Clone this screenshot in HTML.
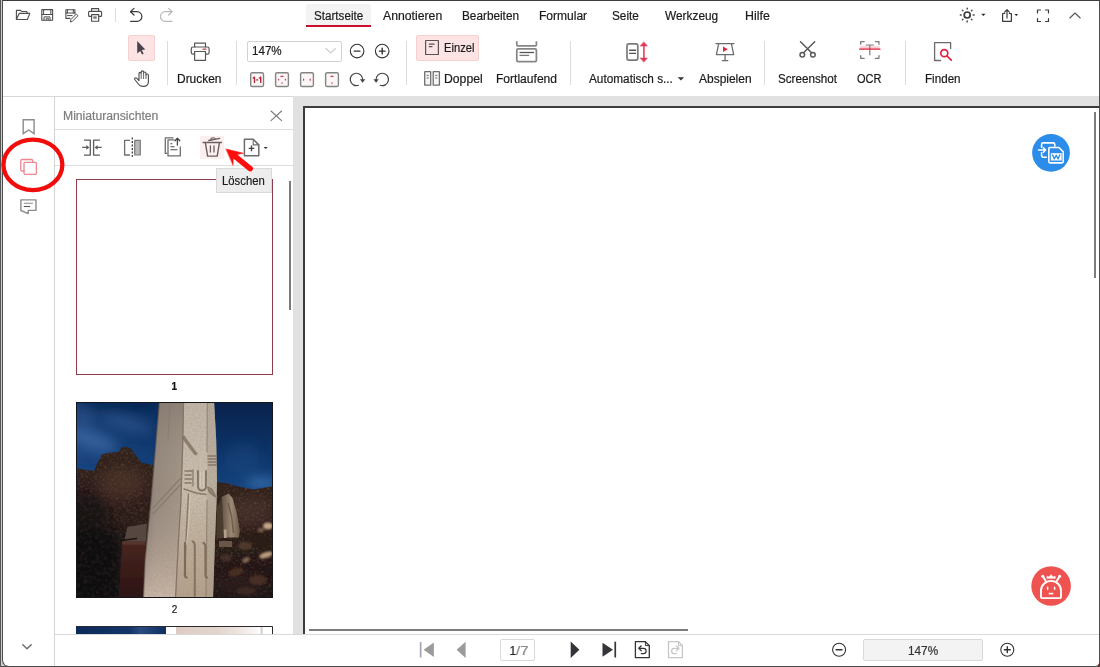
<!DOCTYPE html>
<html lang="de">
<head>
<meta charset="utf-8">
<title>PDF Viewer</title>
<style>
html,body{margin:0;padding:0;}
body{width:1100px;height:667px;overflow:hidden;background:#cdcdcd;font-family:"Liberation Sans",sans-serif;position:relative;}
#win{position:absolute;left:2px;top:0;width:1096px;height:665px;border:1px solid #4b4b4b;border-top-color:#3c3c3c;border-radius:0 0 5px 7px;background:#fff;overflow:hidden;}
.a{position:absolute;}
.t{position:absolute;white-space:pre;transform-origin:0 0;-webkit-text-stroke:0.2px currentColor;}
.sep{position:absolute;width:1px;background:#dcdcdc;}
svg{position:absolute;overflow:visible;}
</style>
</head>
<body>
<div class="a" style="left:0;top:0;width:1px;height:667px;background:#555;"></div>
<div class="a" style="left:1092px;top:659px;width:8px;height:8px;background:#8a1626;"></div>
<div class="a" style="left:0;top:666px;width:1100px;height:1px;background:#4b4b4b;"></div>
<div id="win"></div>
<!-- everything below is positioned in page coordinates -->
<div id="ui" class="a" style="left:0;top:0;width:1100px;height:667px;">

<!-- ===== structure ===== -->
<!-- active tab -->
<div class="a" style="left:306px;top:4px;width:65px;height:21px;background:#f3f3f3;border-radius:3px 3px 0 0;"></div>
<div class="a" style="left:306px;top:25px;width:65px;height:2px;background:#c8102e;"></div>

<!-- toolbar bottom line + gray workspace -->
<div class="a" style="left:3px;top:96px;width:290px;height:1px;background:#d8d8d8;"></div>
<div class="a" style="left:293px;top:96px;width:806px;height:538px;background:#e1e1e1;"></div>
<!-- page -->
<div class="a" style="left:303px;top:106px;width:796px;height:528px;background:#fff;border-left:2px solid #3c3c3c;border-top:2px solid #3c3c3c;box-sizing:border-box;"></div>
<!-- page scrollbars -->
<div class="a" style="left:309px;top:629px;width:379px;height:2px;background:#7c7c7c;"></div>
<div class="a" style="left:1094px;top:112px;width:2px;height:166px;background:#7c7c7c;"></div>

<!-- left rail divider -->
<div class="a" style="left:54px;top:96px;width:1px;height:570px;background:#d4d4d4;"></div>
<!-- panel lines -->
<div class="a" style="left:55px;top:129px;width:238px;height:1px;background:#dedede;"></div>
<div class="a" style="left:55px;top:165px;width:238px;height:1px;background:#dedede;"></div>
<!-- panel scrollbar -->
<div class="a" style="left:289px;top:181px;width:2px;height:129px;background:#7c7c7c;"></div>

<!-- bottom bar -->
<div class="a" style="left:55px;top:634px;width:1044px;height:28px;background:#fff;"></div>
<div class="a" style="left:55px;top:634px;width:1044px;height:1px;background:#d9d9d9;"></div>

<!-- toolbar separators -->
<div class="sep" style="left:115px;top:8px;height:14px;"></div>
<div class="sep" style="left:167px;top:41px;height:44px;"></div>
<div class="sep" style="left:236px;top:41px;height:44px;"></div>
<div class="sep" style="left:406px;top:41px;height:44px;"></div>
<div class="sep" style="left:570px;top:41px;height:44px;"></div>
<div class="sep" style="left:764px;top:41px;height:44px;"></div>
<div class="sep" style="left:905px;top:41px;height:44px;"></div>

<!-- selected buttons -->
<div class="a" style="left:128px;top:34.5px;width:27px;height:26px;background:#fce4e4;border:1px solid #f8d0d0;border-radius:2px;box-sizing:border-box;"></div>
<div class="a" style="left:416px;top:34.5px;width:63px;height:26px;background:#fce4e4;border:1px solid #f8d0d0;border-radius:2px;box-sizing:border-box;"></div>
<!-- zoom combo -->
<div class="a" style="left:247px;top:40.5px;width:94.5px;height:21px;background:#fff;border:1px solid #d2d2d2;border-radius:2px;box-sizing:border-box;"></div>

<!-- thumbnails -->
<div class="a" style="left:76px;top:179px;width:197px;height:196px;background:#fff;border:1px solid #8e3a4b;box-sizing:border-box;"></div>
<svg class="a" style="left:76px;top:402px;" width="197" height="196" viewBox="76 402 197 196">
<defs>
  <clipPath id="t2clip"><rect x="76" y="402" width="197" height="196"/></clipPath>
  <linearGradient id="t2sky" x1="0" y1="0" x2="0" y2="1">
    <stop offset="0" stop-color="#09224c"/><stop offset=".45" stop-color="#0d3265"/><stop offset="1" stop-color="#184a87"/>
  </linearGradient>
  <linearGradient id="t2skyL" x1="0" y1="0" x2="1" y2="0">
    <stop offset="0" stop-color="#2a5c9c" stop-opacity=".5"/><stop offset="1" stop-color="#154786" stop-opacity=".3"/>
  </linearGradient>
  <linearGradient id="t2lf" x1="0" y1="0" x2="1" y2="0">
    <stop offset="0" stop-color="#73675f"/><stop offset=".3" stop-color="#94877c"/><stop offset="1" stop-color="#a6988a"/>
  </linearGradient>
  <linearGradient id="t2lfv" x1="0" y1="0" x2="0" y2="1">
    <stop offset="0" stop-color="#7a7068" stop-opacity=".6"/><stop offset=".45" stop-color="#a39587" stop-opacity=".1"/><stop offset="1" stop-color="#cfbbab" stop-opacity=".95"/>
  </linearGradient>
  <linearGradient id="t2rf" x1="0" y1="0" x2="0" y2="1">
    <stop offset="0" stop-color="#c0b5a7"/><stop offset=".42" stop-color="#cbc0af"/><stop offset=".7" stop-color="#c0af9b"/><stop offset="1" stop-color="#b5a08a"/>
  </linearGradient>
  <linearGradient id="t2gr" x1="0" y1="0" x2="0" y2="1">
    <stop offset="0" stop-color="#33221d"/><stop offset=".45" stop-color="#2c1d19"/><stop offset="1" stop-color="#1c1214"/>
  </linearGradient>
  <linearGradient id="t2p2" x1="0" y1="0" x2="1" y2="0">
    <stop offset="0" stop-color="#5f5044"/><stop offset=".55" stop-color="#9c8873"/><stop offset="1" stop-color="#6e5c4b"/>
  </linearGradient>
  <filter id="t2b1" x="-20%" y="-20%" width="140%" height="140%"><feGaussianBlur stdDeviation="0.7"/></filter>
  <filter id="t2b15" x="-30%" y="-30%" width="160%" height="160%"><feGaussianBlur stdDeviation="1.3"/></filter>
  <filter id="t2b3" x="-30%" y="-30%" width="160%" height="160%"><feGaussianBlur stdDeviation="3"/></filter>
  <filter id="t2b6" x="-40%" y="-40%" width="180%" height="180%"><feGaussianBlur stdDeviation="6"/></filter>
  <filter id="t2noise" x="0" y="0" width="100%" height="100%">
    <feTurbulence type="fractalNoise" baseFrequency="0.42" numOctaves="3" seed="7" result="n"/>
    <feColorMatrix in="n" type="matrix" values="0 0 0 0 0.38  0 0 0 0 0.25  0 0 0 0 0.18  0.75 0 0 0 -0.37"/>
    <feGaussianBlur stdDeviation="0.5"/>
  </filter>
  <filter id="t2noiseD" x="0" y="0" width="100%" height="100%">
    <feTurbulence type="fractalNoise" baseFrequency="0.25" numOctaves="3" seed="11" result="n"/>
    <feColorMatrix in="n" type="matrix" values="0 0 0 0 0.06  0 0 0 0 0.03  0 0 0 0 0.04  0 1.8 0 0 -0.75"/>
  </filter>
  <filter id="t2grain" x="0" y="0" width="100%" height="100%">
    <feTurbulence type="fractalNoise" baseFrequency="0.55" numOctaves="2" seed="3" result="n"/>
    <feColorMatrix in="n" type="matrix" values="0 0 0 0 0.30  0 0 0 0 0.25  0 0 0 0 0.20  0 0 1.4 0 -0.52"/>
  </filter>
  <clipPath id="t2pclip"><path d="M159.500 400H214L216.200 440L217 480L216.500 502L215 540L213 600H143.300L145.100 560L151 500L155.300 450Z"/></clipPath>
  <linearGradient id="t2slab" x1="0" y1="0" x2="0" y2="1"><stop offset="0" stop-color="#4a261e"/><stop offset="1" stop-color="#2a1214"/></linearGradient>
</defs>
<g clip-path="url(#t2clip)">
  <!-- sky -->
  <rect x="76" y="402" width="197" height="100" fill="url(#t2sky)"/>
  <rect x="76" y="402" width="84" height="75" fill="url(#t2skyL)"/>
  <g filter="url(#t2b6)">
    <ellipse cx="92" cy="440" rx="26" ry="9" fill="#4a78b4" opacity=".55" transform="rotate(18 92 440)"/>
    <ellipse cx="128" cy="424" rx="26" ry="6" fill="#3f6ca8" opacity=".45" transform="rotate(14 128 424)"/>
    <ellipse cx="120" cy="404" rx="40" ry="8" fill="#08244e" opacity=".7"/>
    <ellipse cx="84" cy="418" rx="10" ry="7" fill="#3c5f97" opacity=".45"/>
    <ellipse cx="262" cy="483" rx="16" ry="4" fill="#4a86c8" opacity=".8"/>
    <ellipse cx="242" cy="458" rx="18" ry="16" fill="#1b4c8c" opacity=".3"/>
    <ellipse cx="86" cy="462" rx="14" ry="5" fill="#0d346c" opacity=".6"/>
  </g>
  <!-- ground & rocks -->
  <g filter="url(#t2b1)">
    <path d="M74 468L94 471L97 464L102 454.500L109 452.700L118 452L123 446.600L130.500 448L136.700 456.500L141.300 462.700L152.700 465L160 466V600H74Z" fill="url(#t2gr)"/>
    <path d="M214 482L226 483L238 486.400L253.500 489.400L262 488L275 486V600H210Z" fill="url(#t2gr)"/>
  </g>
  <rect x="76" y="446" width="197" height="152" filter="url(#t2noise)" clip-path="url(#t2gclip)"/>
  <clipPath id="t2gclip"><path d="M74 468L94 471L97 464L102 454.500L109 452.700L118 452L123 446.600L130.500 448L136.700 456.500L141.300 462.700L152.700 465L160 466V600H74ZM214 482L226 483L238 486.400L253.500 489.400L262 488L275 486V600H210Z"/></clipPath>
  <g filter="url(#t2b6)">
    <ellipse cx="122" cy="484" rx="24" ry="16" fill="#5a3d2d" opacity=".5"/>
    <rect x="66" y="530" width="56" height="80" fill="#0c080c" opacity=".97"/>
    <ellipse cx="88" cy="515" rx="22" ry="22" fill="#140d0e" opacity=".75"/>
    <ellipse cx="250" cy="512" rx="24" ry="14" fill="#5a4232" opacity=".45"/>
    <ellipse cx="240" cy="585" rx="28" ry="12" fill="#2d1d19" opacity=".7"/>
  </g>
  <rect x="76" y="500" width="70" height="98" filter="url(#t2noiseD)" opacity=".5"/>
  <!-- slab bottom-left -->
  <g filter="url(#t2b1)">
    <path d="M127.500 527L147 523.500L146 541.500H124Z" fill="#574740"/>
    <path d="M122.500 541L145.500 541L144 600H118.500Z" fill="url(#t2slab)"/>
    <path d="M122.500 541H145.500V544.500H122Z" fill="#5a3a32" opacity=".8"/>
    <path d="M121 540.500L137 538.500" stroke="#1b1210" stroke-width="1.400"/>
  </g>
  <!-- second pillar + rubble on right -->
  <g filter="url(#t2b1)">
    <path d="M221.500 497L228.500 493.500L232.500 498L236.500 512L239.800 530L239 537.500H223.500L221 520Z" fill="url(#t2p2)"/>
    <path d="M228 503L231.500 516L233.500 533" stroke="#6d5b4b" stroke-width="1.400" fill="none"/>
    <path d="M219.800 529.500H226.600V538H219.800Z" fill="#b3a08b"/>
    <path d="M216.500 508L222 498L224 538H216.500Z" fill="#493a2f"/>
    <path d="M219 541H232V547H219Z" fill="#6a5647"/>
  </g>
  <g filter="url(#t2b15)">
    <ellipse cx="268" cy="526" rx="5" ry="3.500" fill="#c4a585"/>
    <ellipse cx="261" cy="530" rx="3" ry="2" fill="#8a6e56" opacity=".8"/>
    <ellipse cx="266" cy="555" rx="7" ry="3" fill="#b89a7d" transform="rotate(-18 266 555)"/>
    <ellipse cx="246" cy="560" rx="4" ry="2.500" fill="#967a60" opacity=".8" transform="rotate(-25 246 560)"/>
    <ellipse cx="262" cy="541" rx="9" ry="6" fill="#2b1c19"/>
    <ellipse cx="245" cy="546" rx="7" ry="4" fill="#6a4e3c" opacity=".55"/>
    <ellipse cx="236" cy="572" rx="8" ry="4" fill="#64402c" opacity=".5" transform="rotate(-20 236 572)"/>
    <ellipse cx="258" cy="580" rx="9" ry="5" fill="#5e3f2e" opacity=".55"/>
    <ellipse cx="226" cy="558" rx="6" ry="4" fill="#564033" opacity=".55"/>
    <ellipse cx="246" cy="591" rx="10" ry="4" fill="#4e3428" opacity=".5"/>
    <ellipse cx="268" cy="570" rx="4" ry="6" fill="#241614" opacity=".9"/>
  </g>
  <!-- main pillar -->
  <g filter="url(#t2b1)">
    <path d="M159.500 400H184V502L176 600H143.300L145.100 560L151 500L155.300 450Z" fill="url(#t2lf)"/>
    <path d="M159.500 400H184V502L176 600H143.300L145.100 560L151 500L155.300 450Z" fill="url(#t2lfv)"/>
    <path d="M183.500 400H214L216.200 440L217 480L216.500 502L215 540L213 600H175.300L178.500 540L180.900 502L182.900 440Z" fill="url(#t2rf)"/>
    <path d="M207.500 400H214L216.200 440L217 480L216.500 502L215 540L213 600H206L207.300 500Z" fill="#a99b8c" opacity=".45"/>
  </g>
  <rect x="140" y="402" width="80" height="196" filter="url(#t2grain)" clip-path="url(#t2pclip)" opacity=".45"/>
  <!-- carvings -->
  <g filter="url(#t2b1)" fill="none" stroke-linecap="round">
    <path d="M183.500 402L182.900 440L180.900 502L178.500 540L175.500 598" stroke="#7d6f63" stroke-width="1.300" opacity=".9"/>
    <path d="M207.300 402L207 452M207 500L206 598" stroke="#8b7d6f" stroke-width="1.200" opacity=".8"/>
    <path d="M170 402L168 440" stroke="#85796f" stroke-width="1.100" opacity=".7"/>
    <!-- diagonal lines on left face -->
    <path d="M181 478L153 508M181 484L153 514" stroke="#85766a" stroke-width="1.100" opacity=".85"/>
    <!-- hatched band -->
    <path d="M184.500 438L195.500 453" stroke="#7a6a5c" stroke-width="4.200" opacity=".75"/>
    <path d="M186 437L197 452" stroke="#d2c6b6" stroke-width="1.200" opacity=".8"/>
    <!-- right strip fingers -->
    <path d="M208 456H216M208 459H216.300M208 462H216.300M208.300 465H216" stroke="#7f6f60" stroke-width="1.300" opacity=".85"/>
    <!-- belt motifs -->
    <path d="M185 471H192M185 475H191M185 479H192M185 483H191" stroke="#7d6d5e" stroke-width="1.400" opacity=".85"/>
    <path d="M193 470V486" stroke="#7d6d5e" stroke-width="1.300" opacity=".8"/>
    <path d="M198 471V486Q198 490.500 202 490.500Q206 490.500 206 486V471" stroke="#7a6a5b" stroke-width="1.800" opacity=".9"/>
    <path d="M200.500 472V486Q200.500 488 202 488Q203.500 488 203.500 486V472" stroke="#d6cabb" stroke-width="1" opacity=".8"/>
    <path d="M184 489L196 493L206 494.500" stroke="#7d6d5e" stroke-width="1.400" opacity=".85"/>
    <path d="M208 487L212 489L216 497L212 495L209 492Z" fill="#8a7a6a" stroke="#7a6a5b" stroke-width="1" opacity=".85"/>
    <!-- arm -->
    <path d="M188.500 494L186.500 530L184.500 575" stroke="#847466" stroke-width="1.500" opacity=".9"/>
    <path d="M190.300 494L188.200 530L186.300 545" stroke="#d8cdbd" stroke-width="1" opacity=".7"/>
    <!-- fingers -->
    <path d="M185 543V575Q185 577.500 186.700 577.500" stroke="#7d6a58" stroke-width="2.200"/>
    <path d="M192.500 541.500Q194.800 542 194.800 546V596" stroke="#82705e" stroke-width="2" opacity=".95"/>
    <path d="M203.500 543Q205.500 544 205.500 548V575Q205.500 577.500 207 577.500" stroke="#7d6a58" stroke-width="2.200" opacity=".95"/>
    
  </g>
  <!-- pillar left-edge shadow & texture -->
  <path d="M159.500 400L155.300 450L151 500L145.100 560L143.300 600" stroke="#5d5049" stroke-width="1.400" fill="none" opacity=".6" filter="url(#t2b1)"/>
</g>
<rect x="76.500" y="402.500" width="196" height="195" fill="none" stroke="#15151c" stroke-width="1"/>
</svg>

<svg class="a" style="left:76px;top:626px;" width="197" height="8" viewBox="76 626 197 8">
<defs>
  <linearGradient id="t3a" x1="0" y1="0" x2="1" y2="0">
    <stop offset="0" stop-color="#0b2a5a"/><stop offset=".6" stop-color="#123568"/><stop offset=".72" stop-color="#2a4b7c"/><stop offset="1" stop-color="#0e2f62"/>
  </linearGradient>
  <linearGradient id="t3b" x1="0" y1="0" x2="1" y2="0">
    <stop offset="0" stop-color="#dccbc3"/><stop offset=".5" stop-color="#e3d5cd"/><stop offset=".8" stop-color="#efe7e2"/><stop offset="1" stop-color="#fbf9f8"/>
  </linearGradient>
</defs>
<rect x="76" y="626" width="197" height="8" fill="#fff"/>
<rect x="76" y="626" width="90" height="8" fill="url(#t3a)"/>
<rect x="176" y="626" width="82" height="8" fill="url(#t3b)"/>
<rect x="260.500" y="626" width="2.200" height="8" fill="#d8d0cc"/>
<path d="M76 626.500H272.500V634" fill="none" stroke="#2a2a30" stroke-width="1"/>
</svg>


<!-- trash hover bg -->
<div class="a" style="left:200px;top:136px;width:24px;height:23px;background:#fcefef;"></div>
<!-- tooltip -->
<div class="a" style="left:215.500px;top:167.500px;width:56px;height:25px;background:#ededed;border:1px solid #dadada;box-sizing:border-box;"></div>

<!-- bottom bar fields -->
<div class="a" style="left:500px;top:639px;width:35px;height:22px;background:#fff;border:1px solid #d9d9d9;border-radius:2px;box-sizing:border-box;"></div>
<div class="a" style="left:863px;top:639px;width:120px;height:22px;background:#f3f3f3;border:1px solid #d9d9d9;border-radius:2px;box-sizing:border-box;"></div>

<svg width="1100" height="667" viewBox="0 0 1100 667" style="left:0;top:0;" fill="none" stroke-linecap="round" stroke-linejoin="round">
<!-- ===== quick access ===== -->
<g stroke="#4d4d4d" stroke-width="1.1">
  <!-- open folder -->
  <path d="M16.400 19.500V10.400H20.600L21.600 11.500H26.800L27.400 13.400"/>
  <path d="M16.400 19.500L19.200 13.400H29.800L27.400 19.500Z"/>
  <!-- save -->
  <path d="M41.800 9.600H52.600V20.200H41.800Z"/>
  <path d="M43.600 9.600V14.500M50.800 9.600V14.500M41.800 14.500H52.600" stroke-width="1"/>
  <path d="M44 20.200V16.900H50V20.200" stroke-width="1"/>
  <path d="M46.300 20V18.300H48.300V20" stroke-width="0.900"/>
  <!-- save as -->
  <path d="M70 18.400H65.900V9.700H74.900V13.800"/>
  <path d="M67.400 9.700V13M73.300 9.700V13M65.900 13H74.900" stroke-width="1"/>
  <path d="M67.400 15.600H72.200" stroke-width="1"/>
  <path d="M76.600 14.300L78 15.700L72.200 21.500L70.300 21.900L70.700 20.100Z" stroke-width="1"/>
  <!-- print small -->
  <path d="M91.600 11.400V8.600H98.700V11.400"/>
  <path d="M91.600 16.400H89.600Q88.600 16.400 88.600 15.400V12.400Q88.600 11.400 89.600 11.400H100.600Q101.600 11.400 101.600 12.400V15.400Q101.600 16.400 100.600 16.400H98.700"/>
  <path d="M91.600 14.600H98.700V21.200H91.600Z"/>
  <rect x="93.300" y="16.300" width="3.400" height="2.500" fill="#7a7a7a" stroke="none"/>
  <!-- undo -->
  <path d="M134 8.400L130.5 11.7L134 15" stroke="#3c3c3c" stroke-width="1.2"/>
  <path d="M130.700 11.700H137.100A4.800 4.800 0 0 1 137.100 21.300H130.600" stroke="#3c3c3c" stroke-width="1.200"/>
</g>
<g stroke="#b9b9b9" stroke-width="1.2">
  <!-- redo -->
  <path d="M168.600 8.400L172.100 11.700L168.600 15"/>
  <path d="M171.900 11.700H165.200A4.800 4.800 0 0 0 165.200 21.300H172"/>
</g>
<!-- top right -->
<g stroke="#3a3a3a" stroke-width="1.2">
  <!-- sun -->
  <circle cx="967.2" cy="15.0" r="3" stroke-width="1.700"/>
  <path d="M973.20 15.00L974.10 15.00M971.44 19.24L972.08 19.88M967.20 21.00L967.20 21.90M962.96 19.24L962.32 19.88M961.20 15.00L960.30 15.00M962.96 10.76L962.32 10.12M967.20 9.00L967.20 8.10M971.44 10.76L972.08 10.12" stroke-width="1.400" stroke="#444"/>
  <!-- share -->
  <path d="M1004.700 13.500H1002.600V21.300H1011.400V13.500H1009.300"/>
  <path d="M1007 18V9.800M1004.600 12.200L1007 9.700L1009.400 12.200"/>
  <!-- fullscreen -->
  <path d="M1037.500 13V10H1040.500M1045.500 10H1048.500V13M1048.500 18.500V21.500H1045.500M1040.500 21.500H1037.500V18.500"/>
  <!-- chevron up -->
  <path d="M1069.800 18L1075 13L1080.200 18" stroke-width="1.1" stroke="#555"/>
</g>
<path d="M981.300 13.800H985.500L983.400 16.100Z" fill="#222"/>
<path d="M1014.500 14H1018.100L1016.300 16Z" fill="#222"/>

<!-- ===== toolbar ===== -->
<!-- cursor arrow -->
<path d="M137.200 41V53.600L140.200 50.900L142.100 54.600L143.700 53.800L141.800 50.100L145.300 49.600Z" fill="#4b4349"/>
<!-- hand -->
<g stroke="#4e4e4e" stroke-width="1.150">
  <path d="M139 80.300V73.600Q139 72.400 140.100 72.400Q141.200 72.400 141.200 73.600V72.100Q141.200 70.900 142.400 70.900Q143.600 70.900 143.600 72.100V73.100Q143.600 72 144.800 72Q146 72 146 73.200V75Q146 74 147.200 74Q148.400 74 148.400 75.200V81.500Q148.400 86.400 143.500 86.400H142.500Q140 86.400 138.300 84L134.800 79.500Q134.200 78.500 135.100 77.900Q136 77.400 136.900 78.300L139 80.600"/>
  <path d="M141.200 73.600V78.600M143.600 73V78.600M146 75V78.600" stroke-width="1" stroke="#666"/>
</g>
<!-- printer big -->
<g stroke="#585858" stroke-width="1.2">
  <path d="M194.600 47V43.100H205.500V47"/>
  <path d="M194.600 54.200H193Q191.300 54.200 191.300 52.500V48.700Q191.300 47 193 47H207.400Q209.100 47 209.100 48.700V52.500Q209.100 54.200 207.400 54.200H205.500"/>
  <path d="M194.600 51.500H205.500V60.300H194.600Z"/>
</g>
<path d="M203 49.200H205.800" stroke="#d9304a" stroke-width="1.2"/>
<!-- combo chevron -->
<path d="M326 48.500L330.700 52.800L335.400 48.500" stroke="#c9c9c9" stroke-width="1.100"/>
<!-- zoom - + -->
<g stroke="#333" stroke-width="1.1">
  <circle cx="357.100" cy="51.100" r="6.800"/>
  <circle cx="382.200" cy="51.100" r="6.800"/>
  <path d="M354.200 51.100H360M379.300 51.100H385.100M382.200 48.200V54" stroke-width="1.400"/>
</g>
<!-- fit icons -->
<g stroke="#848484" stroke-width="1.400" fill="#fdf6f6">
  <rect x="250.700" y="72.700" width="12.800" height="13.800" rx="1.600"/>
  <rect x="275.600" y="72.700" width="12.800" height="13.800" rx="1.600"/>
  <rect x="300.600" y="72.700" width="12.800" height="13.800" rx="1.600"/>
  <rect x="325.600" y="72.700" width="12.800" height="13.800" rx="1.600"/>
</g>
<g stroke="#c43c54" stroke-width="1.200">
  <path d="M253.300 78L254.500 77.200V82.400M259.500 78L260.700 77.200V82.400" stroke-width="1.400" stroke="#b02a44"/>
  <path d="M256.600 79.900H257.800" stroke-width="1.100" stroke="#b02a44"/>
  <path d="M281 76.400H283M278.600 79.300V80M285.400 79.300V80M281.600 83H282.400"/>
  <path d="M303.600 79V80.200M310.200 79V80.200"/>
  <path d="M331 76.400H333M331.600 83H332.400"/>
</g>
<!-- rotate cw / ccw -->
<g stroke="#444" stroke-width="1.200">
  <path d="M358.500 85.300A6.200 6.200 0 1 1 362.600 79.900"/>
  <path d="M380.200 85.300A6.200 6.200 0 1 0 376.100 79.900"/>
</g>
<path d="M359.900 79.200H365.300L362.600 82.700Z" fill="#444"/>
<path d="M373.400 79.200H378.800L376.100 82.700Z" fill="#444"/>
<!-- Einzel icon -->
<g stroke="#5b5154" stroke-width="1.200">
  <rect x="425.600" y="40.500" width="12.800" height="14" rx="0.300"/>
  <path d="M428.800 44.100H434.600M428.800 46.700H432.400" stroke-linecap="butt"/>
</g>
<!-- Doppel icon -->
<g stroke="#6f6f6f" stroke-width="1.300">
  <rect x="424.700" y="71.700" width="6" height="13.500" rx="0.200" fill="#f6f6f6"/>
  <rect x="433.200" y="71.700" width="6.200" height="13.500" rx="0.200" fill="#f6f6f6"/>
  <path d="M426.600 75.400H428.800M426.600 78H428.800M435.200 75.400H437.400M435.200 78H437.400" stroke-width="1" stroke-linecap="butt"/>
</g>
<!-- Fortlaufend icon -->
<g stroke="#868686" stroke-width="1.750" stroke-linecap="butt">
  <path d="M516.800 41.300V44.800Q516.800 45.800 517.800 45.800H535.400Q536.400 45.800 536.400 44.800V41.300"/>
  <rect x="516.800" y="48.900" width="19.600" height="12.600" rx="1.300"/>
  <path d="M519.500 52.500H534" stroke-width="1.300" stroke="#555"/>
  <path d="M519.500 55.400H529.200" stroke-width="1.300" stroke="#777"/>
</g>
<!-- Auto scroll -->
<g stroke="#7b7b7b" stroke-width="1.700">
  <rect x="627" y="43.800" width="10.800" height="16.300" rx="1.800"/>
  <path d="M629.100 50.300H636.100M629.100 53.400H636.100" stroke-width="1.400" stroke="#555" stroke-linecap="butt"/>
</g>
<path d="M643.900 44.500V59.600" stroke="#e6405c" stroke-width="1.600"/>
<path d="M643.900 42.100L647.300 46H640.500ZM643.900 62L647.300 58.100H640.500Z" fill="#e2385a" stroke="#e2385a" stroke-width="0.600" stroke-linejoin="round"/>
<!-- dropdown triangle -->
<path d="M677.700 77.200H684.100L680.900 80.600Z" fill="#333"/>
<!-- Abspielen -->
<g stroke="#6c6c6c" stroke-width="1.300">
  <path d="M716 43.600H734"/>
  <path d="M718.700 43.600L716.400 54.700H733.700L731.400 43.600"/>
  <path d="M725.100 54.700V60.600M722.400 60.600H727.800"/>
</g>
<path d="M723 46.600V51.900L727.800 49.250Z" fill="#e3263f"/>
<!-- scissors -->
<g stroke="#595959" stroke-width="1.500">
  <path d="M800.500 41.800L811.600 52.800M814.700 41.800L803.600 52.800"/>
  <circle cx="802.300" cy="54.700" r="2.300"/>
  <circle cx="812.900" cy="54.700" r="2.300"/>
</g>
<!-- OCR -->
<rect x="860" y="46.300" width="19.600" height="2.600" fill="#f9ccd2"/>
<g stroke="#7b7b7b" stroke-width="1.300" stroke-linecap="butt">
  <path d="M860.700 44.200V41.600H864.200M875.400 41.600H878.900V44.200M878.900 55.600V58.300H875.400M864.200 58.300H860.700V55.600" stroke-linecap="round"/>
  <path d="M865.700 45H873.900M869.800 45V55.200" stroke-width="1.200"/>
</g>
<path d="M859.600 49.200H880" stroke="#e0233f" stroke-width="1.300"/>
<!-- Finden -->
<path d="M950.600 48.500V42.600H934.600V60.500H940.500" stroke="#6b6b6b" stroke-width="1.300"/>
<g stroke="#e0203c" stroke-width="1.700">
  <circle cx="944.300" cy="53.200" r="3.500"/>
  <path d="M947 56L951.300 60.200"/>
</g>
<!-- ===== left rail ===== -->
<path d="M23.200 133.700V119.800H34.100V133.700L28.650 130Z" stroke="#8c8c8c" stroke-width="1.400" stroke-linejoin="miter"/>
<g stroke="#f0868e" stroke-width="1.300">
  <path d="M23.900 171H21.900Q20.800 171 20.800 169.900V160.600Q20.800 159.500 21.900 159.500H31.600Q32.700 159.500 32.700 160.600V162.300"/>
  <rect x="24" y="162.400" width="12.400" height="11.900" rx="1.100"/>
</g>
<g stroke="#8c8c8c" stroke-width="1.300">
  <path d="M20.900 199.900H36V210.400H28.200V213.600L20.900 210.500Z" stroke-width="1.400"/>
  <path d="M23.800 203.300H32.900" stroke="#9a9a9a" stroke-width="1.200" stroke-linecap="butt"/><path d="M23.800 206.500H30" stroke="#555" stroke-width="1.100" stroke-linecap="butt"/>
</g>
<!-- rail bottom chevron -->
<path d="M22.800 644.800L27 648.800L31.200 644.800" stroke="#6e6e6e" stroke-width="1.500"/>
<!-- red ellipse annotation -->
<ellipse cx="32.900" cy="164.850" rx="29.450" ry="25.300" stroke="#f20d0d" stroke-width="4.300"/>

<!-- ===== panel header ===== -->
<path d="M271 111L281.600 120.600M281.600 111L271 120.600" stroke="#7a7a7a" stroke-width="1.100"/>
<!-- merge -->
<g stroke="#5c5c5c" stroke-width="1.300" stroke-linecap="butt">
  <path d="M84 140.100H90.300V155.100H84M99.900 140.100H93.600V155.100H99.900"/>
  <path d="M82.200 147.400H87M101.700 147.400H97"/>
</g>
<path d="M86.300 145.100L89.400 147.400L86.300 149.700ZM97.600 145.100L94.500 147.400L97.600 149.700Z" fill="#5c5c5c"/>
<!-- split -->
<rect x="134.700" y="140.300" width="5.600" height="14.700" fill="#b9b9b9" stroke="#7b7b7b" stroke-width="1.200"/>
<path d="M130 140.300H124.600V155H130" stroke="#6e6e6e" stroke-width="1.300" stroke-linecap="butt"/>
<path d="M132.300 137.400V156.800" stroke="#2c2c2c" stroke-width="1.200" stroke-dasharray="2.200 1.300" stroke-linecap="butt"/>
<!-- extract -->
<g stroke="#6e6e6e" stroke-width="1.300" stroke-linecap="butt">
  <path d="M167.600 153.400H165.300V137.900H173.500"/>
  <path d="M174.500 139.900H168V155.900H180.300V146.500"/>
  <path d="M170.400 143.700H172.400M170.400 146.700H174.600M170.400 149.700H177.400" stroke="#4a4a4a" stroke-width="1.100"/>
  <path d="M177.400 145V138.600M175 140.800L177.400 138.300L179.800 140.800" stroke="#444" stroke-linecap="round"/>
</g>
<!-- trash -->
<g stroke="#6b6060" stroke-width="1.400">
  <path d="M203.100 142.500H221.500"/>
  <path d="M205.400 142.800L207.600 156.100H217.200L219.400 142.800"/>
  <path d="M210.400 146V152M214 146V152" stroke-width="1.300"/>
  <path d="M208.700 140.500L219.700 138.400" stroke-width="1.300"/>
  <path d="M210.600 139.800Q211 137.600 213.600 137.800Q215 138 215.100 139" stroke-width="1.100"/>
</g>
<!-- add page -->
<g stroke="#6c6c6c" stroke-width="1.500">
  <path d="M253.200 139.300H244.400V155.800H258.800V144.900Z"/>
  <path d="M253.200 139.300V144.900H258.800" stroke-width="1.100"/>
  <path d="M248.700 148.400H254.300M251.500 145.600V151.200" stroke="#444" stroke-width="1.400" stroke-linecap="butt"/>
</g>
<path d="M263.600 146.900H267.800L265.700 149.100Z" fill="#333"/>

<!-- ===== bottom bar ===== -->
<rect x="419.800" y="642.100" width="1.700" height="15.400" fill="#a3a3b6" stroke="none"/>
<path d="M423.600 649.700L433.900 642.400V657Z" fill="#9b9b9b"/>
<path d="M456.600 649.700L465.600 641.700V657.900Z" fill="#9b9b9b"/>
<path d="M570.700 641.500V657.900L579.400 649.700Z" fill="#34353b"/>
<path d="M602.500 642.700V656.700L613 649.700Z" fill="#34353b"/>
<rect x="614.400" y="641.700" width="1.700" height="15.800" fill="#3d3432" stroke="none"/>
<g stroke="#333" stroke-width="1.300">
  <path d="M645.400 641.700H635.400V657.600H649.300V645.600Z"/>
  <path d="M645.400 641.700V645.600H649.300" stroke-width="1"/>
  <path d="M641.300 645.800L638.700 648.300L641.300 650.800M638.900 648.300H643.400A2.700 2.700 0 0 1 643.400 653.700H641.300" stroke-width="1.200"/>
</g>
<g stroke="#c6c6c6" stroke-width="1.300">
  <path d="M678.500 641.700H668.500V657.600H682.400V645.600Z"/>
  <path d="M678.500 641.700V645.600H682.400" stroke-width="1"/>
  <path d="M676.400 645.800L679 648.300L676.400 650.800M678.800 648.300H674.300A2.700 2.700 0 0 0 674.300 653.700H676.400" stroke-width="1.200"/>
</g>
<g stroke="#333" stroke-width="1.100">
  <circle cx="839.100" cy="649.700" r="6.500"/>
  <circle cx="1007.300" cy="649.700" r="6.500"/>
  <path d="M836.200 649.700H842M1004.400 649.700H1010.200M1007.300 646.800V652.600" stroke-width="1.400"/>
</g>

<!-- ===== floating buttons ===== -->
<circle cx="1051" cy="152.850" r="18.900" fill="#2b8de9" stroke="none"/>
<g stroke="#fff" stroke-width="1.600">
  <path d="M1041.600 147.200V144.500Q1041.600 142.900 1043.200 142.900H1053.200Q1054.800 142.900 1054.800 144.500V146"/>
  <path d="M1041.600 152.800V155.600Q1041.600 157.200 1043.200 157.200H1046.300"/>
  <path d="M1038.500 150H1045.200M1043.400 147.800L1045.600 150L1043.400 152.200"/>
  <path d="M1058.900 147.500H1050.100Q1048.800 147.500 1048.800 148.800V161.600Q1048.800 162.900 1050.100 162.900H1061.900Q1063.200 162.900 1063.200 161.600V151.800Z"/>
</g>
<rect x="1050.800" y="153.200" width="10.800" height="7.300" fill="#fff" stroke="none"/>
<path d="M1052.700 154.900L1054.300 158.900L1056.200 155.300L1058.100 158.900L1059.700 154.900" stroke="#2b8de9" stroke-width="1.300"/>
<circle cx="1051.100" cy="586" r="19.800" fill="#ee5350" stroke="none"/>
<g stroke="#fff" stroke-width="1.700">
  <path d="M1041 597.100V590.600A10 9.700 0 0 1 1061 590.600V597.100Q1061 598.100 1060 598.100H1042Q1041 598.100 1041 597.100Z" stroke-width="1.900"/>
  <path d="M1043 576.500L1045.600 580.800M1059.500 576.500L1056.900 580.800" stroke-width="2"/>
  <path d="M1046.900 578.100L1047.100 576.200L1049.100 577L1051.100 574.700L1053.100 577L1055.100 576.200L1055.300 578.100Z" stroke-width="0.600" fill="#fff"/>
  <path d="M1047.600 587.200V589.200M1054.600 587.200V589.200" stroke-width="1.500"/>
  <path d="M1048.700 593.600H1053.300" stroke-width="1.700" stroke-linecap="butt"/>
</g>
<circle cx="1042.800" cy="576.200" r="1.500" fill="#fff" stroke="none"/>
<circle cx="1059.600" cy="576.200" r="1.500" fill="#fff" stroke="none"/>

<!-- red arrow annotation -->
<path d="M250.200 168.600L234.800 156.100" stroke="#ff0d0d" stroke-width="5.600" stroke-linecap="round"/>
<path d="M226.100 149L243.400 153.200L237 154.600L233.300 159L233 165.100Z" fill="#ff0d0d" stroke="#ff0d0d" stroke-width="0.500"/>


</svg>


<span class="t" style="left:314.0px;top:8.84px;font-size:12px;line-height:14px;transform:scaleX(0.9704);color:#1b1b1b;font-weight:400">Startseite</span>
<span class="t" style="left:383.0px;top:8.84px;font-size:12px;line-height:14px;transform:scaleX(1.0199);color:#1b1b1b;font-weight:400">Annotieren</span>
<span class="t" style="left:461.8px;top:8.84px;font-size:12px;line-height:14px;transform:scaleX(0.9820);color:#1b1b1b;font-weight:400">Bearbeiten</span>
<span class="t" style="left:538.7px;top:8.84px;font-size:12px;line-height:14px;transform:scaleX(1.0018);color:#1b1b1b;font-weight:400">Formular</span>
<span class="t" style="left:612.3px;top:8.84px;font-size:12px;line-height:14px;transform:scaleX(0.9832);color:#1b1b1b;font-weight:400">Seite</span>
<span class="t" style="left:664.9px;top:8.84px;font-size:12px;line-height:14px;transform:scaleX(0.9886);color:#1b1b1b;font-weight:400">Werkzeug</span>
<span class="t" style="left:745.4px;top:8.84px;font-size:12px;line-height:14px;transform:scaleX(1.0327);color:#1b1b1b;font-weight:400">Hilfe</span>
<span class="t" style="left:177.4px;top:71.84px;font-size:12px;line-height:14px;transform:scaleX(0.9958);color:#1b1b1b;font-weight:400">Drucken</span>
<span class="t" style="left:251.7px;top:43.84px;font-size:12px;line-height:14px;transform:scaleX(0.9673);color:#1b1b1b;font-weight:400">147%</span>
<span class="t" style="left:443.9px;top:40.64px;font-size:12px;line-height:14px;transform:scaleX(0.9331);color:#1b1b1b;font-weight:400">Einzel</span>
<span class="t" style="left:443.9px;top:71.84px;font-size:12px;line-height:14px;transform:scaleX(1.0176);color:#1b1b1b;font-weight:400">Doppel</span>
<span class="t" style="left:496.1px;top:71.84px;font-size:12px;line-height:14px;transform:scaleX(1.0049);color:#1b1b1b;font-weight:400">Fortlaufend</span>
<span class="t" style="left:588.7px;top:71.84px;font-size:12px;line-height:14px;transform:scaleX(0.9827);color:#1b1b1b;font-weight:400">Automatisch s...</span>
<span class="t" style="left:698.8px;top:71.84px;font-size:12px;line-height:14px;transform:scaleX(0.9977);color:#1b1b1b;font-weight:400">Abspielen</span>
<span class="t" style="left:777.7px;top:71.84px;font-size:12px;line-height:14px;transform:scaleX(0.9703);color:#1b1b1b;font-weight:400">Screenshot</span>
<span class="t" style="left:857.1px;top:71.84px;font-size:12px;line-height:14px;transform:scaleX(0.9186);color:#1b1b1b;font-weight:400">OCR</span>
<span class="t" style="left:925.0px;top:71.84px;font-size:12px;line-height:14px;transform:scaleX(0.9699);color:#1b1b1b;font-weight:400">Finden</span>
<span class="t" style="left:63.1px;top:109.24px;font-size:12px;line-height:14px;transform:scaleX(1.0132);color:#7d7d7d;font-weight:400">Miniaturansichten</span>
<span class="t" style="left:222.2px;top:174.24px;font-size:12px;line-height:14px;transform:scaleX(0.9433);color:#1b1b1b;font-weight:400">Löschen</span>
<span class="t" style="left:171.6px;top:380.74px;font-size:10px;line-height:12px;transform:scaleX(1.0000);color:#111;font-weight:700">1</span>
<span class="t" style="left:171.8px;top:603.74px;font-size:10px;line-height:12px;transform:scaleX(1.0000);color:#222;font-weight:400">2</span>
<span class="t" style="left:509.4px;top:644.24px;font-size:12px;line-height:14px;transform:scaleX(1.0000);color:#222;font-weight:400">1</span>
<span class="t" style="left:516.1px;top:644.24px;font-size:12px;line-height:14px;transform:scaleX(1.2381);color:#8a8a8a;font-weight:400">/7</span>
<span class="t" style="left:907.9px;top:643.64px;font-size:12px;line-height:14px;transform:scaleX(0.9804);color:#333;font-weight:400">147%</span>
</div>
</body>
</html>
